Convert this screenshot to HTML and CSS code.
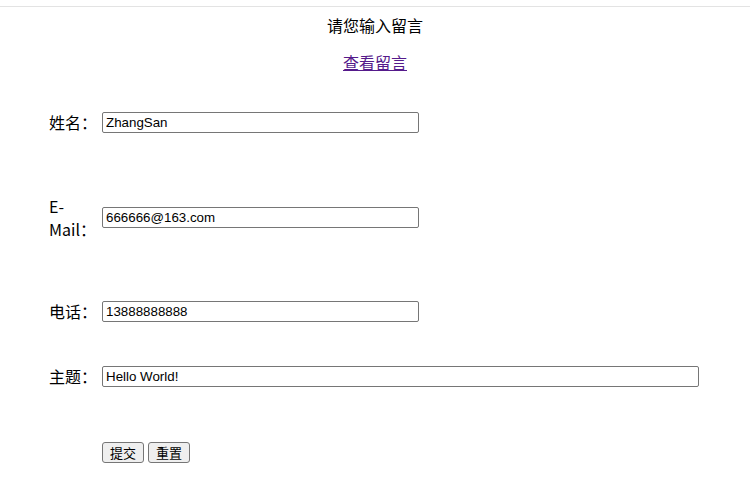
FILE: index.html
```html
<!DOCTYPE html>
<html lang="zh">
<head>
  <meta charset="UTF-8" />
  <title>留言板</title>
  <link rel="stylesheet" href="styles.css">
</head>
<body>

  <div class="topline"></div>

  <h3 class="title">请您输入留言</h3>
  <p class="view"><a href="#list">查看留言</a></p>

  <form class="form" action="#" onsubmit="return false;">
    <label class="label" for="name">姓名：</label>
    <div><input class="field" type="text" id="name" value="ZhangSan"></div>

    <label class="label" for="mail">E-Mail：</label>
    <div><input class="field" type="text" id="mail" value="666666@163.com"></div>

    <label class="label" for="tel">电话：</label>
    <div><input class="field" type="text" id="tel" value="13888888888"></div>

    <label class="label" for="subject">主题：</label>
    <div><input class="field wide" type="text" id="subject" value="Hello World!"></div>

    <span></span>
    <div class="actions">
      <button class="btn" type="submit">提交</button>
      <button class="btn" type="reset">重置</button>
    </div>
  </form>

</body>
</html>
```

FILE: styles.css
```css
* { box-sizing: border-box; }

body {
  margin: 0;
  font-family: "Noto Sans CJK SC", "Noto Sans", sans-serif;
  font-size: 16px;
  color: #000;
  background: #fff;
}

.topline {
  margin-top: 6px;
  border-top: 1px solid #e3e3e3;
}

.title {
  margin: 7px 0 0;
  font-size: 16px;
  font-weight: normal;
  line-height: 22px;
  text-align: center;
}

.view {
  margin: 15px 0 0;
  line-height: 22px;
  text-align: center;
}

.view a { color: #551a8b; }

.form {
  display: grid;
  grid-template-columns: 48px 1fr;
  grid-template-rows: 62px 129px 58px 72px 80px;
  column-gap: 5px;
  align-items: center;
  margin: 18px 0 0 49px;
  width: 650px;
}

.label {
  line-height: 23px;
}

.field {
  width: 317px;
  height: 21px;
  padding: 1px 3px;
  border: 1px solid #767676;
  border-radius: 2px;
  font-family: "Liberation Sans", Arial, sans-serif;
  font-size: 13.33px;
  color: #000;
  display: block;
}

.field.wide { width: 597px; }

.actions {
  display: flex;
  gap: 4px;
}

.btn {
  height: 21px;
  padding: 0 7px;
  background: #efefef;
  border: 1px solid #767676;
  border-radius: 3px;
  font-family: "Noto Sans CJK SC", sans-serif;
  font-size: 13px;
  line-height: 19px;
  color: #000;
}
```
